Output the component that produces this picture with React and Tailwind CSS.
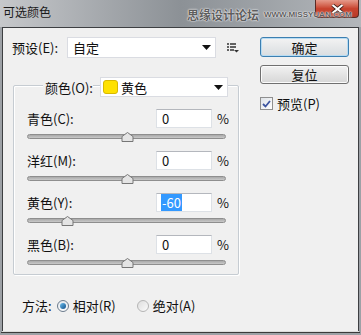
import React from 'react'

const font = "font-['Microsoft_YaHei','Noto_Sans_CJK_SC',sans-serif]"

function Slider({ value }) {
  // thumb goes from -100 (left) to +100 (right)
  const pct = (value + 100) / 2
  return (
    <div className="relative mt-[4px] h-[10px] w-[199px]">
      <div className="absolute left-0 right-0 top-[2px] h-[5px] rounded-full border border-[#8e8e8e] bg-gradient-to-b from-[#a9a9a9] to-[#c9c9c9]" />
      <svg
        className="absolute top-0 -ml-[6px]"
        style={{ left: `${pct}%` }}
        width="13"
        height="10"
        viewBox="0 0 13 10"
      >
        <path d="M6.5 0.5 L12 4.5 V9.5 H1 V4.5 Z" fill="#e4e4e4" stroke="#767676" />
      </svg>
    </div>
  )
}

function ChannelRow({ label, value, selected }) {
  return (
    <div className="mb-[9px] last:mb-0">
      <div className="flex h-[19px] items-center">
        <span className="text-[13px] leading-none">{label}</span>
        <div className="ml-auto flex h-[19px] w-[56px] items-center border border-[#dde1e6] border-t-[#b4b7bd] bg-white pl-[4px] text-[13px] leading-none">
          {selected ? (
            <span className="bg-[#3399ff] px-[1px] py-[2px] text-white">{value}</span>
          ) : (
            <span className="pl-[1px]">{value}</span>
          )}
        </div>
        <span className="ml-[5px] w-[11px] text-[13px] leading-none">%</span>
      </div>
      <Slider value={Number(value)} />
    </div>
  )
}

function DropArrow() {
  return (
    <svg width="9" height="5" viewBox="0 0 9 5" className="ml-auto">
      <path d="M0 0 H9 L4.5 5 Z" fill="#111" />
    </svg>
  )
}

export default function App() {
  return (
    <div className={`relative flex h-[335px] w-[361px] flex-col overflow-hidden bg-[#9da1a6] text-[#111] ${font}`}>
      {/* title bar */}
      <div className="relative flex h-[27px] shrink-0 items-start bg-gradient-to-r from-[#c6c8cb] via-[#8c9196] to-[#b3b7bb]">
        <span className="ml-[3px] mt-[5px] text-[12px] leading-[14px] text-[#1a1a1a]">可选颜色</span>
        <div className="ml-auto mr-[2px] flex h-[18px] w-[44px] items-center justify-center rounded-b-[4px] border border-t-0 border-[#5a2a24] bg-gradient-to-b from-[#e59a8b] via-[#c8442f] to-[#b83a28]">
          <svg width="13" height="10" viewBox="0 0 13 10">
            <path d="M1.5 1 L11.5 9 M11.5 1 L1.5 9" stroke="#3a1a14" strokeWidth="3.6" />
            <path d="M1.5 1 L11.5 9 M11.5 1 L1.5 9" stroke="#fff" strokeWidth="2.2" />
          </svg>
        </div>
        {/* watermark */}
        <div className="absolute left-[187px] top-[9px] flex items-center gap-[5px] whitespace-nowrap text-[#5e5e5e] [text-shadow:0_0_2px_#fff,0_0_1px_#fff]">
          <span className="text-[12px] font-bold leading-none">思缘设计论坛</span>
          <span className="font-['Liberation_Sans',sans-serif] text-[8px] font-bold leading-none">WWW.MISSYUAN.COM</span>
        </div>
      </div>

      {/* body */}
      <div className="mx-[2px] flex h-[304px] shrink-0 border border-b-0 border-[#3d3f42] bg-[#f0f0f0] pl-[9px] pt-[9px]">
        {/* left column */}
        <div className="flex w-[228px] flex-col">
          <div className="flex h-[21px] items-center">
            <span className="w-[55px] text-[13px] leading-none">预设(E):</span>
            <div className="flex h-[21px] w-[149px] items-center border border-[#dadce2] bg-white pl-[5px] pr-[4px] text-[13px] leading-none">
              <span>自定</span>
              <DropArrow />
            </div>
            <svg width="12" height="10" viewBox="0 0 12 10" className="ml-[11px]">
              <path d="M0 1 H2 M0 4 H2 M0 7 H2 M3 1 H9 M3 4 H9 M3 7 H7" stroke="#333" strokeWidth="1.3" />
              <path d="M7 7 H12 L9.5 9.5 Z" fill="#333" />
            </svg>
          </div>

          {/* group box */}
          <div className="ml-[1px] mt-[27px] w-[226px] rounded-[2px] border border-[#c6ccd2] pb-[6px] pl-[13px] pr-[10px] shadow-[inset_1px_1px_0_#fff,1px_1px_0_#fff]">
            <div className="-mt-[9px] mb-[12px] flex h-[20px] items-center justify-end">
              <span className="bg-[#f0f0f0] pl-[2px] text-[13px] leading-none">颜色(O):</span>
              <div className="ml-[7px] flex h-[20px] w-[128px] items-center border border-[#dadce2] bg-white pl-[2px] pr-[4px] text-[13px] leading-none">
                <span className="h-[14px] w-[15px] rounded-[3px] border border-[#d8b800] bg-[#ffe100]" />
                <span className="ml-[3px]">黄色</span>
                <DropArrow />
              </div>
            </div>
            <ChannelRow label="青色(C):" value="0" />
            <ChannelRow label="洋红(M):" value="0" />
            <ChannelRow label="黄色(Y):" value="-60" selected />
            <ChannelRow label="黑色(B):" value="0" />
          </div>

          {/* method row */}
          <div className="ml-[10px] mt-[21px] flex h-[19px] items-center text-[13px] leading-none">
            <span>方法:</span>
            <span className="ml-[5px] flex h-[12px] w-[12px] items-center justify-center rounded-full border border-[#6b7b8c] bg-gradient-to-b from-[#e4e9ee] to-[#fafbfc]">
              <span className="h-[6px] w-[6px] rounded-full bg-gradient-to-br from-[#6cc0f0] to-[#0f4f89]" />
            </span>
            <span className="ml-[4px]">相对(R)</span>
            <span className="ml-[21px] h-[12px] w-[12px] rounded-full border border-[#b5b5b5] bg-gradient-to-br from-[#dedede] to-[#fbfbfb]" />
            <span className="ml-[4px]">绝对(A)</span>
          </div>
        </div>

        {/* right column */}
        <div className="ml-[20px] flex w-[89px] flex-col">
          <div className="flex h-[20px] items-center justify-center rounded-[3px] border border-[#3c7fb1] bg-gradient-to-b from-[#f3f3f3] to-[#d9dde0] text-[13px] leading-none shadow-[inset_0_0_0_1px_#b7dcf3]">
            确定
          </div>
          <div className="mt-[8px] flex h-[19px] items-center justify-center rounded-[3px] border border-[#707070] bg-gradient-to-b from-[#f2f2f2] to-[#d6d6d6] text-[13px] leading-none shadow-[inset_0_0_0_1px_#fbfbfb]">
            复位
          </div>
          <div className="mt-[13px] flex items-center text-[13px] leading-none">
            <span className="flex h-[13px] w-[13px] items-center justify-center border border-[#8f8f8f] bg-gradient-to-br from-[#dfe3e8] to-white">
              <svg width="9" height="8" viewBox="0 0 9 8">
                <path d="M1 4 L3.5 6.5 L8 1" stroke="#3d55a0" strokeWidth="1.8" fill="none" />
              </svg>
            </span>
            <span className="ml-[4px]">预览(P)</span>
          </div>
        </div>
      </div>
      <div className="mx-[2px] h-[1px] shrink-0 bg-[#dcdcdc]" />
      <div className="mx-[1px] h-[1px] shrink-0 bg-[#3a3a3a]" />
    </div>
  )
}
